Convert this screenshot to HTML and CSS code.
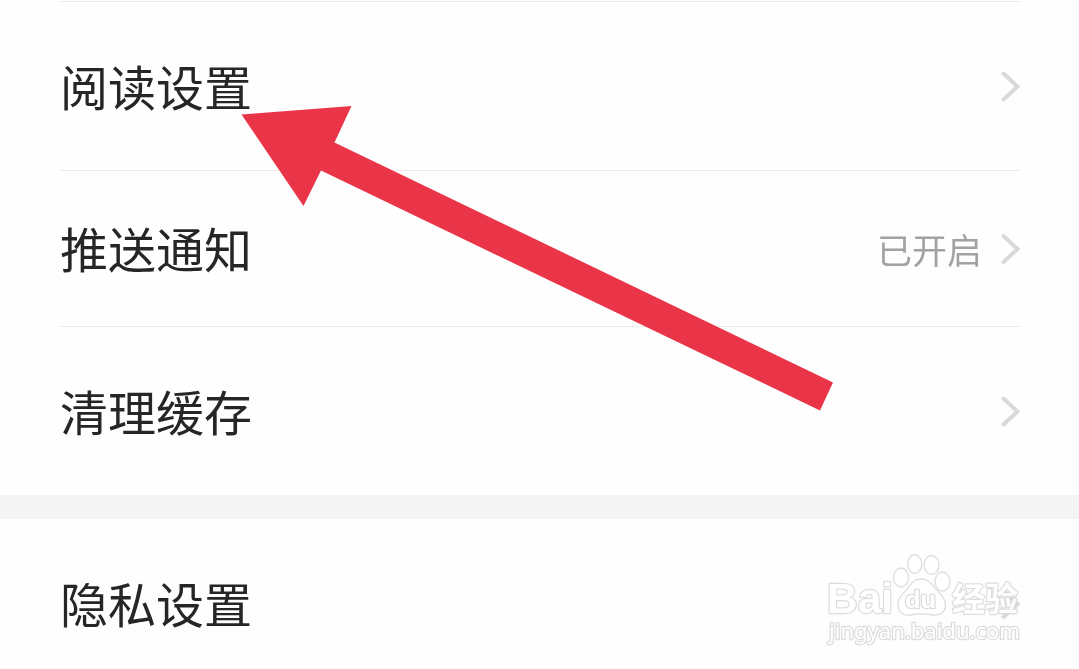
FILE: index.html
```html
<!DOCTYPE html>
<html lang="zh-CN">
<head>
  <meta charset="UTF-8">
  <meta name="viewport" content="width=device-width, initial-scale=1.0">
  <title>设置</title>
  <link rel="stylesheet" href="styles.css">
</head>
<body>
  <div class="settings">
    <ul class="group">
      <li class="row">
        <span class="label">阅读设置</span>
        <svg class="chevron" viewBox="0 0 20 32"><path d="M3.500 3.500 L17.500 16.500 L3.500 29.500"/></svg>
      </li>
      <li class="row row-short">
        <span class="label">推送通知</span>
        <span class="value">已开启</span>
        <svg class="chevron" viewBox="0 0 20 32"><path d="M3.500 3 L17.500 16 L3.500 29"/></svg>
      </li>
      <li class="row">
        <span class="label">清理缓存</span>
        <svg class="chevron" viewBox="0 0 20 32"><path d="M3.500 3.500 L17.500 16.500 L3.500 29.500"/></svg>
      </li>
    </ul>
    <ul class="group">
      <li class="row row-last">
        <span class="label">隐私设置</span>
        <svg class="chevron" viewBox="0 0 20 32"><path d="M3.500 3 L17.500 16 L3.500 29"/></svg>
      </li>
    </ul>
  </div>

  <!-- pointer to the reading settings -->
  <svg class="arrow" viewBox="0 0 592 306">
    <path d="M0.5 9.5 L110.5 1 L93.5 37.5 L592 277.5 L579 305.5 L80 65.5 L62.5 101 Z"/>
  </svg>

  <svg class="watermark" viewBox="0 0 206 104">
    <g class="mark">
      <text class="brand" x="6" y="65.500" textLength="66" lengthAdjust="spacingAndGlyphs">Bai</text>
      <ellipse cx="80" cy="30.500" rx="7.500" ry="9.500"/>
      <ellipse cx="93.700" cy="17" rx="7" ry="9.500"/>
      <ellipse cx="110.500" cy="18" rx="7.500" ry="9.500"/>
      <ellipse cx="121.500" cy="34.500" rx="7.500" ry="9.500"/>
      <path d="M100 32 C93 32 90 37 87 41 C82 47 76 51 77 59 C78 66 83 69 89 68 C97 66.500 104 66.500 111 68 C118 69 124 66 124.500 59 C125 51 119 47 114 41 C110 36 107 32 100 32 Z"/>
      <text class="du" x="84" y="61" textLength="31" lengthAdjust="spacingAndGlyphs">du</text>
      <text class="jingyan" x="131" y="64" textLength="66" lengthAdjust="spacingAndGlyphs">经验</text>
      <text class="site" x="8" y="92" textLength="191" lengthAdjust="spacingAndGlyphs">jingyan.baidu.com</text>
    </g>
  </svg>
</body>
</html>
```
FILE: styles.css
```css
body {
  margin: 0;
  height: 669px;
  overflow: hidden;
  position: relative;
  background-color: #fefefe;
  font-family: "Noto Sans CJK SC", sans-serif;
}
.settings {
  padding-top: 1px;
  will-change: transform;
}
.group {
  list-style: none;
  margin: 0;
  padding: 0 59px 0 60px;
}
.group + .group {
  border-top: 24px solid #f4f4f4;
}
.row {
  display: flex;
  align-items: center;
  box-sizing: border-box;
  height: 169px;
  border-top: 1px solid #ececec;
}
.row-short {
  height: 156px;
}
.row-last {
  border-top: none;
}
.label {
  flex: 1;
  padding-bottom: 3px;
  font-size: 48px;
  line-height: 70px;
  color: #262626;
}
.value {
  margin-right: 18px;
  font-size: 35px;
  line-height: 52px;
  color: #a2a2a2;
}
.chevron {
  width: 20px;
  height: 32px;
  fill: none;
  stroke: #d9d9d9;
  stroke-width: 4;
  stroke-linecap: round;
}
.arrow {
  position: absolute;
  left: 241px;
  top: 105px;
  width: 592px;
  height: 306px;
  fill: #ea3548;
}
.watermark {
  position: absolute;
  left: 821px;
  top: 547px;
  width: 206px;
  height: 104px;
}
.mark {
  fill: #fff;
  stroke: #d8d8d8;
  stroke-width: 1.3;
  stroke-linejoin: round;
  opacity: 0.85;
}
.mark text {
  paint-order: stroke;
  stroke-width: 2.5;
}
.brand {
  font: bold 43px "Liberation Sans", sans-serif;
}
.du {
  font: bold 23px "Liberation Sans", sans-serif;
}
.jingyan {
  font: bold 33px "Noto Sans CJK SC", sans-serif;
}
.site {
  font: 21px "Noto Sans", sans-serif;
}
```
